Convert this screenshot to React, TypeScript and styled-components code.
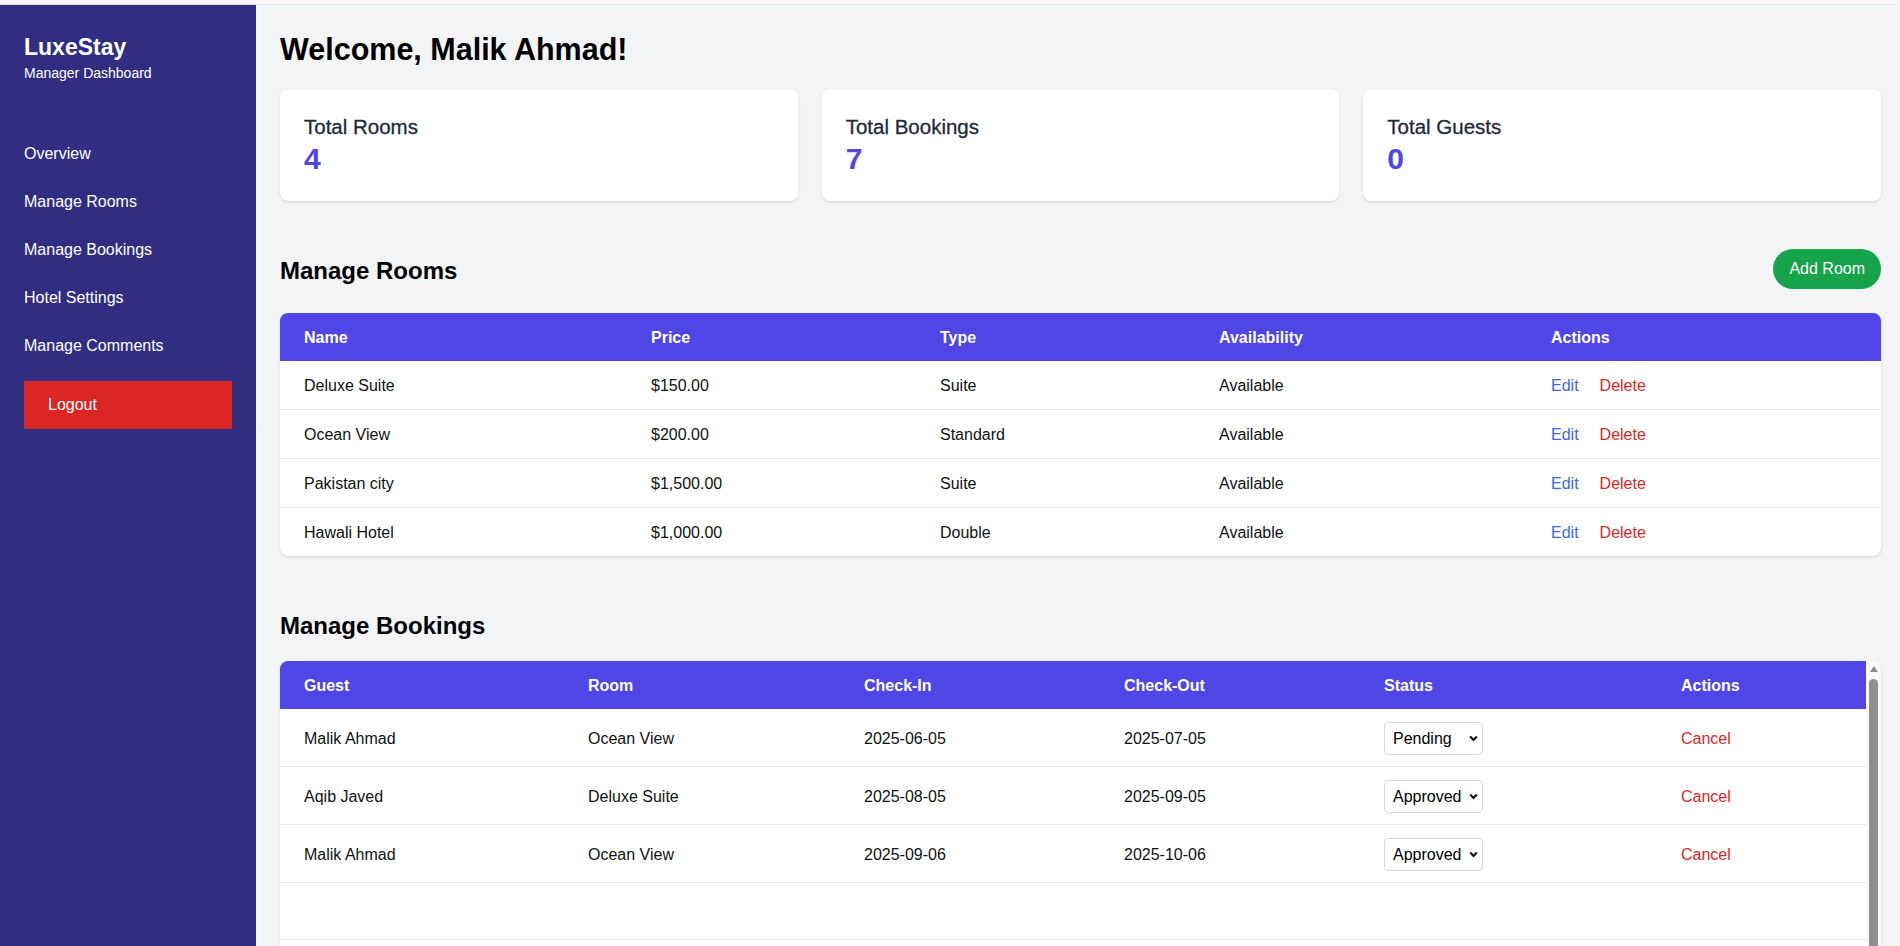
import styled, { createGlobalStyle } from "styled-components";

const GlobalStyle = createGlobalStyle`
  * {
    box-sizing: border-box;
  }

  html, body {
    margin: 0;
    padding: 0;
  }

  body {
    font-family: "Liberation Sans", Arial, sans-serif;
    background: #f3f4f6;
    color: #111827;
    overflow: hidden;
  }
`;

const TopStrip = styled.div`
  height: 5px;
  background: #fcf7f7;
  border-bottom: 1px solid #e6e2e2;
`;

const Layout = styled.div`
  display: flex;
  height: calc(100vh - 5px);
  overflow: hidden;
`;

const Sidebar = styled.aside`
  flex: 0 0 256px;
  width: 256px;
  background: #312e81;
  color: #fff;
  padding: 26px 24px 24px;
  display: flex;
  flex-direction: column;
`;

const Brand = styled.div`
  margin-bottom: 47px;

  h1 {
    margin: 0;
    font-size: 23px;
    line-height: 32px;
    font-weight: 700;
  }

  p {
    margin: 0;
    font-size: 14px;
    line-height: 20px;
  }
`;

const Nav = styled.nav`
  display: flex;
  flex-direction: column;
`;

const NavLink = styled.a`
  display: block;
  padding: 12px 0;
  font-size: 16px;
  line-height: 24px;
  color: #fff;
  text-decoration: none;
  cursor: pointer;
`;

const LogoutButton = styled.button`
  margin-top: 11px;
  width: 100%;
  padding: 12px 24px;
  border: none;
  background: #dc2626;
  color: #fff;
  text-align: left;
  font: 400 16px/24px "Liberation Sans", Arial, sans-serif;
  cursor: pointer;
`;

const Main = styled.main`
  flex: 1;
  min-width: 0;
  padding: 26px 19px 0 24px;
  overflow: hidden;
`;

const Welcome = styled.h1`
  margin: 0 0 22px;
  font-size: 30.5px;
  line-height: 36px;
  font-weight: 700;
  color: #000;
`;

const StatsGrid = styled.div`
  display: grid;
  grid-template-columns: repeat(3, 1fr);
  gap: 24px;
  margin-bottom: 48px;
`;

const StatCard = styled.div`
  background: #fff;
  border-radius: 8px;
  padding: 24px;
  box-shadow: 0 1px 3px rgba(0, 0, 0, 0.1), 0 1px 2px -1px rgba(0, 0, 0, 0.1);

  h3 {
    margin: 0;
    font-size: 20.5px;
    line-height: 28px;
    font-weight: 400;
    color: #1f2937;
    -webkit-text-stroke: 0.3px #1f2937;
  }

  span {
    display: block;
    font-size: 30px;
    line-height: 36px;
    font-weight: 700;
    color: #4f46e5;
  }
`;

const Section = styled.section`
  margin-bottom: 48px;
`;

const SectionHeader = styled.div<{ $gap: number }>`
  display: flex;
  align-items: center;
  justify-content: space-between;
  min-height: 40px;
  margin-bottom: ${({ $gap }) => $gap}px;
`;

const SectionTitle = styled.h2`
  margin: 0;
  padding-top: 3px;
  font-size: 24px;
  line-height: 32px;
  font-weight: 700;
  color: #000;
`;

const AddButton = styled.button`
  height: 40px;
  padding: 0 16px;
  border: none;
  border-radius: 9999px;
  background: #16a34a;
  color: #fff;
  font: 400 16px/24px "Liberation Sans", Arial, sans-serif;
  cursor: pointer;
`;

const TableCard = styled.div`
  display: flex;
  align-items: stretch;
  background: #fff;
  border-radius: 8px;
  overflow: hidden;
  box-shadow: 0 1px 3px rgba(0, 0, 0, 0.1), 0 1px 2px -1px rgba(0, 0, 0, 0.1);
`;

const TableBody = styled.div`
  flex: 1;
  min-width: 0;
`;

const ScrollTrack = styled.div`
  flex: 0 0 15px;
  display: flex;
  flex-direction: column;
  align-items: center;
  padding-top: 5px;
  background: #f9f9f9;
`;

const ScrollArrow = styled.div`
  width: 0;
  height: 0;
  border-left: 4.5px solid transparent;
  border-right: 4.5px solid transparent;
  border-bottom: 6px solid #8f8f8f;
  margin-bottom: 7px;
`;

const ScrollThumb = styled.div`
  flex: 1;
  width: 9px;
  border-radius: 5px;
  background: #8f8f8f;
`;

const Table = styled.table`
  width: 100%;
  table-layout: fixed;
  border-collapse: collapse;
  font-size: 16px;
  line-height: 24px;

  tbody tr + tr {
    border-top: 1px solid #e5e7eb;
  }
`;

const Col = styled.col<{ $w: number }>`
  width: ${({ $w }) => $w}px;
`;

const Th = styled.th`
  background: #4f46e5;
  color: #fff;
  text-align: left;
  font-weight: 700;
  padding: 13px 24px 11px;
  white-space: nowrap;
`;

const Td = styled.td`
  padding: 13px 24px 11px;
  color: #111;
  vertical-align: middle;
  white-space: nowrap;
`;

const BlankRow = styled.tr`
  height: 57px;
`;

const LinkButton = styled.button<{ $color: string; $space?: number }>`
  border: none;
  background: none;
  padding: 0;
  margin-right: ${({ $space }) => $space ?? 0}px;
  color: ${({ $color }) => $color};
  font: 400 16px/24px "Liberation Sans", Arial, sans-serif;
  cursor: pointer;
`;

const SelectWrap = styled.span`
  position: relative;
  display: inline-block;
  vertical-align: middle;

  svg {
    position: absolute;
    right: 5px;
    top: 13px;
    pointer-events: none;
  }
`;

const StatusSelect = styled.select`
  appearance: none;
  display: block;
  width: 99px;
  height: 33px;
  padding: 0 16px 0 8px;
  border: 1px solid #d9d9de;
  border-radius: 4px;
  background: #fff;
  color: #000;
  font: 400 16px "Liberation Sans", Arial, sans-serif;
`;

interface Room {
  name: string;
  price: number;
  type: string;
  available: boolean;
}

interface Booking {
  guest: string;
  room: string;
  checkIn: string;
  checkOut: string;
  status: string;
}

const rooms: Room[] = [
  { name: "Deluxe Suite", price: 150, type: "Suite", available: true },
  { name: "Ocean View", price: 200, type: "Standard", available: true },
  { name: "Pakistan city", price: 1500, type: "Suite", available: true },
  { name: "Hawali Hotel", price: 1000, type: "Double", available: true },
];

const bookings: (Booking | null)[] = [
  { guest: "Malik Ahmad", room: "Ocean View", checkIn: "2025-06-05", checkOut: "2025-07-05", status: "Pending" },
  { guest: "Aqib Javed", room: "Deluxe Suite", checkIn: "2025-08-05", checkOut: "2025-09-05", status: "Approved" },
  { guest: "Malik Ahmad", room: "Ocean View", checkIn: "2025-09-06", checkOut: "2025-10-06", status: "Approved" },
  null,
  null,
];

const stats = [
  { label: "Total Rooms", value: 4 },
  { label: "Total Bookings", value: 7 },
  { label: "Total Guests", value: 0 },
];

const roomCols = [
  { label: "Name", w: 347 },
  { label: "Price", w: 289 },
  { label: "Type", w: 279 },
  { label: "Availability", w: 332 },
  { label: "Actions", w: 354 },
];

const bookingCols = [
  { label: "Guest", w: 284 },
  { label: "Room", w: 276 },
  { label: "Check-In", w: 260 },
  { label: "Check-Out", w: 260 },
  { label: "Status", w: 297 },
  { label: "Actions", w: 209 },
];

const money = (n: number) =>
  "$" + n.toLocaleString("en-US", { minimumFractionDigits: 2, maximumFractionDigits: 2 });

const Chevron = () => (
  <svg width="9" height="7" viewBox="0 0 9 7">
    <polyline points="1.2,1.5 4.5,5 7.8,1.5" fill="none" stroke="#111" strokeWidth="2.2" />
  </svg>
);

const App = (): React.ReactElement => (
  <>
    <GlobalStyle />
    <TopStrip />
    <Layout>
      <Sidebar>
        <Brand>
          <h1>LuxeStay</h1>
          <p>Manager Dashboard</p>
        </Brand>
        <Nav>
          <NavLink>Overview</NavLink>
          <NavLink>Manage Rooms</NavLink>
          <NavLink>Manage Bookings</NavLink>
          <NavLink>Hotel Settings</NavLink>
          <NavLink>Manage Comments</NavLink>
          <LogoutButton>Logout</LogoutButton>
        </Nav>
      </Sidebar>

      <Main>
        <Welcome>Welcome, Malik Ahmad!</Welcome>

        <StatsGrid>
          {stats.map((s) => (
            <StatCard key={s.label}>
              <h3>{s.label}</h3>
              <span>{s.value}</span>
            </StatCard>
          ))}
        </StatsGrid>

        <Section>
          <SectionHeader $gap={24}>
            <SectionTitle>Manage Rooms</SectionTitle>
            <AddButton>Add Room</AddButton>
          </SectionHeader>
          <TableCard>
            <TableBody>
              <Table>
                <colgroup>
                  {roomCols.map((c) => (
                    <Col key={c.label} $w={c.w} />
                  ))}
                </colgroup>
                <thead>
                  <tr>
                    {roomCols.map((c) => (
                      <Th key={c.label}>{c.label}</Th>
                    ))}
                  </tr>
                </thead>
                <tbody>
                  {rooms.map((r) => (
                    <tr key={r.name}>
                      <Td>{r.name}</Td>
                      <Td>{money(r.price)}</Td>
                      <Td>{r.type}</Td>
                      <Td>{r.available ? "Available" : "Unavailable"}</Td>
                      <Td>
                        <LinkButton $color="#3b67eb" $space={21}>Edit</LinkButton>
                        <LinkButton $color="#dc2626">Delete</LinkButton>
                      </Td>
                    </tr>
                  ))}
                </tbody>
              </Table>
            </TableBody>
          </TableCard>
        </Section>

        <Section>
          <SectionHeader $gap={17}>
            <SectionTitle>Manage Bookings</SectionTitle>
          </SectionHeader>
          <TableCard>
            <TableBody>
              <Table>
                <colgroup>
                  {bookingCols.map((c) => (
                    <Col key={c.label} $w={c.w} />
                  ))}
                </colgroup>
                <thead>
                  <tr>
                    {bookingCols.map((c) => (
                      <Th key={c.label}>{c.label}</Th>
                    ))}
                  </tr>
                </thead>
                <tbody>
                  {bookings.map((b, i) =>
                    b ? (
                      <tr key={i}>
                        <Td>{b.guest}</Td>
                        <Td>{b.room}</Td>
                        <Td>{b.checkIn}</Td>
                        <Td>{b.checkOut}</Td>
                        <Td>
                          <SelectWrap>
                            <StatusSelect defaultValue={b.status}>
                              <option>Pending</option>
                              <option>Approved</option>
                              <option>Rejected</option>
                            </StatusSelect>
                            <Chevron />
                          </SelectWrap>
                        </Td>
                        <Td>
                          <LinkButton $color="#dc2626">Cancel</LinkButton>
                        </Td>
                      </tr>
                    ) : (
                      <BlankRow key={i}>
                        <Td colSpan={6} />
                      </BlankRow>
                    )
                  )}
                </tbody>
              </Table>
            </TableBody>
            <ScrollTrack>
              <ScrollArrow />
              <ScrollThumb />
            </ScrollTrack>
          </TableCard>
        </Section>
      </Main>
    </Layout>
  </>
);

export default App;
